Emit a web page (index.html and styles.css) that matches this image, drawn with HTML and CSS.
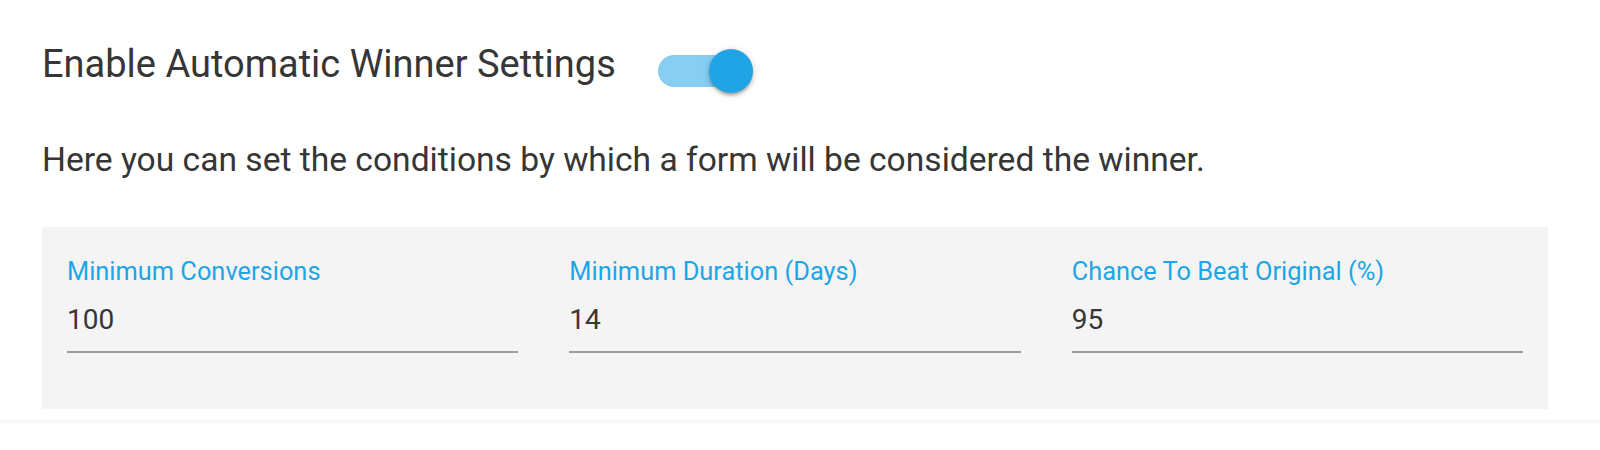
FILE: index.html
```html
<!DOCTYPE html>
<html lang="en">
<head>
<meta charset="utf-8">
<title>Automatic Winner Settings</title>
<link rel="stylesheet" href="styles.css">
</head>
<body>
<div class="page">
  <div class="header">
    <h1 class="title">Enable Automatic Winner Settings</h1>
    <div class="switch" role="switch" aria-checked="true">
      <span class="switch-track"></span>
      <span class="switch-thumb"></span>
    </div>
  </div>
  <p class="description">Here you can set the conditions by which a form will be considered the winner.</p>
  <div class="panel">
    <div class="field">
      <label class="field-label">Minimum Conversions</label>
      <div class="field-value">100</div>
    </div>
    <div class="field">
      <label class="field-label">Minimum Duration (Days)</label>
      <div class="field-value">14</div>
    </div>
    <div class="field">
      <label class="field-label">Chance To Beat Original (%)</label>
      <div class="field-value">95</div>
    </div>
  </div>
</div>
<div class="footer"></div>
</body>
</html>
```

FILE: styles.css
```css
html, body {
  margin: 0;
  padding: 0;
  background: #ffffff;
}

body {
  font-family: Roboto, "Liberation Sans", Arial, sans-serif;
  color: #363636;
  height: 450px;
  overflow: hidden;
}

.page {
  padding: 42px 52px 0 42px;
}

.header {
  display: flex;
  align-items: flex-start;
  height: 44px;
}

.title {
  margin: 0;
  font-size: 38px;
  line-height: 44px;
  font-weight: 400;
  color: #363636;
  white-space: nowrap;
}

.switch {
  position: relative;
  width: 95px;
  height: 44px;
  margin-left: 42px;
  margin-top: 7px;
  flex: none;
}

.switch-track {
  position: absolute;
  left: 0;
  top: 6px;
  width: 84px;
  height: 32px;
  border-radius: 16px;
  background: #88cdf2;
}

.switch-thumb {
  position: absolute;
  right: 0;
  top: 0;
  width: 44px;
  height: 44px;
  border-radius: 50%;
  background: #1fa5e6;
  box-shadow: 0 3px 3px -1px rgba(0, 0, 0, 0.22), 0 2px 5px 0 rgba(0, 0, 0, 0.16), 0 1px 10px 0 rgba(0, 0, 0, 0.1);
}

.description {
  margin: 54px 0 0 0;
  font-size: 33.6px;
  line-height: 40px;
  font-weight: 400;
  color: #363636;
}

.panel {
  margin-top: 47px;
  background: #f4f4f4;
  padding: 29px 25px 56px 25px;
  display: grid;
  grid-template-columns: 1fr 1fr 1fr;
  column-gap: 51px;
}

.field {
  display: flex;
  flex-direction: column;
}

.field-label {
  font-size: 25.4px;
  line-height: 30px;
  color: #1ea5e6;
}

.field-value {
  margin-top: 17px;
  font-size: 28px;
  line-height: 34px;
  color: #363636;
  padding-bottom: 14px;
  border-bottom: 2px solid #9e9e9e;
}

.footer {
  margin-top: 9px;
  height: 6px;
  background: linear-gradient(to bottom, #ffffff, #f7f7f7 60%, #fcfcfc);
}
```
